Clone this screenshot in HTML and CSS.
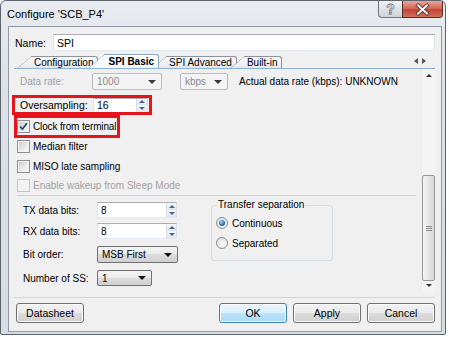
FILE: index.html
```html
<!DOCTYPE html>
<html lang="en">
<head>
    <meta charset="UTF-8">
    <meta name="viewport" content="width=device-width, initial-scale=1.0">
    <title>Configure 'SCB_P4'</title>
    <link rel="stylesheet" href="styles.css">
</head>
<body>
    <div class="window">
        <div class="titlebar">
            <span class="title">Configure 'SCB_P4'</span>
            <div class="caption">
                <span class="cap-help">?</span>
                <span class="cap-close">
                    <svg width="41" height="17" viewBox="0 0 41 17">
                        <path d="M16 4.5 L25 12.5 M25 4.5 L16 12.5" stroke="#4a2323" stroke-width="3.6" stroke-linecap="square"/>
                        <path d="M16 4.5 L25 12.5 M25 4.5 L16 12.5" stroke="#fff" stroke-width="2" stroke-linecap="square"/>
                    </svg>
                </span>
            </div>
        </div>

        <div class="client">
            <div class="name-row">
                <span class="name-label">Name:</span>
                <div class="textbox name-box">SPI</div>
            </div>

            <div class="tabs">
                <span class="tab t1">Configuration</span>
                <span class="tab t2 selected">SPI Basic</span>
                <span class="tab t3">SPI Advanced</span>
                <span class="tab t4">Built-in</span>
                <span class="tab-arrows"><i class="tri-left"></i><i class="tri-right"></i></span>
            </div>

            <div class="panel">
                <div class="panel-body">
                    <div class="row rate-row">
                        <span class="lbl dim">Data rate:</span>
                        <div class="combo combo-off rate-combo">1000<i class="arrow"></i></div>
                        <div class="combo combo-off unit-combo">kbps<i class="arrow"></i></div>
                        <span class="actual">Actual data rate (kbps): UNKNOWN</span>
                    </div>

                    <div class="row over-row marked">
                        <span class="lbl">Oversampling:</span>
                        <div class="textbox over-box">16<span class="spin"><i class="up"></i><i class="down"></i></span></div>
                    </div>

                    <div class="row check-row clock-row marked">
                        <span class="check on">
                            <svg width="11" height="11" viewBox="0 0 11 11"><path d="M2.2 5.6 L4.4 8.2 L8.8 2.2" fill="none" stroke="#21406f" stroke-width="1.6"/></svg>
                        </span>
                        Clock from terminal
                    </div>
                    <div class="row check-row median-row"><span class="check"></span>Median filter</div>
                    <div class="row check-row miso-row"><span class="check"></span>MISO late sampling</div>
                    <div class="row check-row wake-row dim"><span class="check off"></span>Enable wakeup from Sleep Mode</div>

                    <div class="divider"></div>

                    <div class="lower">
                        <div class="bits">
                            <div class="row tx-row">
                                <span class="lbl">TX data bits:</span>
                                <div class="textbox bits-box">8<span class="spin"><i class="up"></i><i class="down"></i></span></div>
                            </div>
                            <div class="row rx-row">
                                <span class="lbl">RX data bits:</span>
                                <div class="textbox bits-box">8<span class="spin"><i class="up"></i><i class="down"></i></span></div>
                            </div>
                            <div class="row order-row">
                                <span class="lbl">Bit order:</span>
                                <div class="combo order-combo">MSB First<i class="arrow"></i></div>
                            </div>
                            <div class="row ss-row">
                                <span class="lbl">Number of SS:</span>
                                <div class="combo ss-combo">1<i class="arrow"></i></div>
                            </div>
                        </div>

                        <fieldset class="group">
                            <legend>Transfer separation</legend>
                            <div class="radio-row first"><span class="radio on"></span>Continuous</div>
                            <div class="radio-row"><span class="radio"></span>Separated</div>
                        </fieldset>
                    </div>
                </div>

                <div class="scrollbar">
                    <div class="sb-btn"><i class="sb-up"></i></div>
                    <div class="sb-track">
                        <div class="sb-thumb"><span class="grip"></span></div>
                    </div>
                    <div class="sb-btn"><i class="sb-down"></i></div>
                </div>
            </div>

            <div class="footer">
                <div class="footer-line"></div>
                <div class="buttons">
                    <button class="btn datasheet">Datasheet</button>
                    <button class="btn ok">OK</button>
                    <button class="btn">Apply</button>
                    <button class="btn">Cancel</button>
                </div>
            </div>
        </div>
    </div>
</body>
</html>
```

FILE: styles.css
```css
* {
    box-sizing: border-box;
}
body {
    margin: 0;
    background: #fff;
    font-family: 'Liberation Sans', Arial, sans-serif;
    font-size: 10px;
    color: #000;
}
.window {
    width: 446px;
    height: 335px;
    border: 1px solid #5d646c;
    border-radius: 6px 6px 2px 2px;
    background: linear-gradient(to bottom, #e8ebef, #dce1e7 30%, #d8dde3);
    display: flex;
    flex-direction: column;
}
.titlebar {
    height: 25px;
    display: flex;
    align-items: flex-start;
}
.title {
    margin: 7px 0 0 6px;
    font-size: 11px;
    line-height: 13px;
}
.caption {
    margin-left: auto;
    margin-right: 2px;
    display: flex;
}
.cap-help {
    width: 24px;
    height: 17px;
    border: 1px solid #6f7780;
    border-top: none;
    border-right: none;
    border-radius: 0 0 0 4px;
    background: linear-gradient(to bottom, #f1f3f5, #dfe3e8 50%, #cdd3da);
    text-align: center;
    font-weight: bold;
    font-size: 14px;
    line-height: 16px;
    color: #fff;
    -webkit-text-stroke: 0.8px #6b7480;
}
.cap-close {
    width: 41px;
    height: 17px;
    border: 1px solid #5c2a25;
    border-top: none;
    border-radius: 0 0 4px 0;
    background: linear-gradient(to bottom, #e8a796, #d26a58 45%, #c24532 55%, #d0705e);
    display: block;
}
.cap-close svg {
    display: block;
    margin-left: -1px;
}
.client {
    flex: 1;
    margin: 0 3px 2px 7px;
    border: 1px solid #8f9aa6;
    background: #f0f0f0;
    padding: 0 6px 0 5px;
    display: flex;
    flex-direction: column;
}

/* name */
.name-row {
    display: flex;
    align-items: center;
    margin-top: 7px;
    height: 17px;
    font-size: 10.5px;
}
.name-label {
    width: 39px;
    padding-left: 1px;
}
.textbox {
    background: #fff;
    border: 1px solid;
    border-color: #abadb3 #dbdfe6 #e3e9ef #e2e3ea;
    display: flex;
    align-items: center;
    padding-left: 3px;
}
.name-box {
    flex: 1;
    height: 17px;
}

/* tabs */
.tabs {
    display: flex;
    align-items: flex-end;
    height: 14px;
    margin-top: 3px;
}
.tab {
    position: relative;
    height: 12px;
    line-height: 11px;
    font-size: 10px;
    padding: 0 4px 0 3px;
    border: 1px solid #8d939b;
    border-left: none;
    border-bottom: none;
    border-radius: 0 3px 0 0;
    background: linear-gradient(to bottom, #fbfbfb, #e6e7e9);
    margin-left: 6px;
    white-space: nowrap;
}
.tab::before {
    content: "";
    position: absolute;
    top: -1px;
    bottom: 0;
    left: -14px;
    width: 18px;
    border-left: 1px solid #8d939b;
    border-top: 1px solid #8d939b;
    border-radius: 2px 0 0 0;
    background: linear-gradient(to bottom, #fbfbfb, #e6e7e9);
    transform: skewX(-50deg);
    transform-origin: 0 100%;
    z-index: -1;
}
.t1 { margin-left: 17px; z-index: 1; }
.t2 { z-index: 5; }
.t3 { z-index: 2; margin-left: 7px; }
.t4 { z-index: 3; margin-left: 7px; }
.tab.selected {
    height: 14px;
    line-height: 13px;
    font-weight: bold;
    border-color: #8aa7c6;
    background: linear-gradient(to bottom, #fff, #f4f7fa);
    padding: 0 4px 0 4px;
}
.tab.selected::before {
    border-color: #8aa7c6;
    background: linear-gradient(to bottom, #fff, #f4f7fa);
    width: 20px;
    left: -16px;
}
.tab-arrows {
    margin-left: auto;
    margin-right: 9px;
    margin-bottom: 4px;
    display: flex;
    gap: 4px;
}
.tri-left, .tri-right {
    width: 0;
    height: 0;
    border-top: 3px solid transparent;
    border-bottom: 3px solid transparent;
}
.tri-left { border-right: 4px solid #555; }
.tri-right { border-left: 4px solid #555; }

/* panel */
.panel {
    height: 224px;
    border-top: 1px solid #8db2d8;
    display: flex;
}
.panel-body {
    flex: 1;
}
.row {
    display: flex;
    align-items: center;
    white-space: nowrap;
}
.lbl {
    flex: none;
}
.dim {
    color: #a2a2a2;
}
.rate-row {
    margin: 4px 0 0 6px;
    height: 17px;
}
.rate-row .lbl { width: 72px; }
.combo {
    height: 17px;
    border: 1px solid #707070;
    border-radius: 2px;
    background: linear-gradient(to bottom, #f3f3f3, #ebebeb 50%, #dddddd 50%, #d0d0d0);
    display: flex;
    align-items: center;
    padding-left: 4px;
}
.arrow {
    margin-left: auto;
    margin-right: 5px;
    width: 0;
    height: 0;
    border-left: 4px solid transparent;
    border-right: 4px solid transparent;
    border-top: 4px solid #111;
}
.combo-off {
    border-color: #b8bcc0;
    background: #f4f4f4;
    color: #8a8a8a;
}
.combo-off .arrow { border-top-color: #3a3a3a; }
.rate-combo { width: 70px; }
.unit-combo { width: 48px; margin-left: 18px; }
.actual { margin-left: 11px; }

.marked {
    outline: 3px solid #e5141d;
}
.over-row {
    margin: 8px 0 0 1px;
    width: 134px;
    height: 14px;
    padding: 0 1px 0 5px;
    font-size: 10.5px;
}
.over-row .lbl { width: 73px; }
.over-box {
    width: 55px;
    height: 15px;
}
.spin {
    margin-left: auto;
    width: 11px;
    height: 100%;
    display: flex;
    flex-direction: column;
    border-left: 1px solid #d6dce3;
}
.spin i {
    flex: 1;
    display: flex;
    align-items: center;
    justify-content: center;
    background: linear-gradient(to bottom, #f6f8fa, #dfe5ec);
}
.spin i::after {
    content: "";
    border-left: 3px solid transparent;
    border-right: 3px solid transparent;
}
.spin .up::after { border-bottom: 3px solid #4a6491; }
.spin .down::after { border-top: 3px solid #4a6491; }

.check-row {
    margin-left: 3px;
    height: 19px;
}
.clock-row {
    margin-top: 6px;
    width: 100px;
    height: 17px;
    letter-spacing: -0.15px;
}
.median-row { margin-top: 2px; }
.miso-row { margin-top: 1px; }
.check {
    width: 13px;
    height: 13px;
    margin-right: 3px;
    border: 1px solid #8e8f8f;
    background: linear-gradient(135deg, #c6c8cb, #eeeff0 65%, #f7f7f7);
    box-shadow: inset 0 0 0 1px #f4f4f4;
    display: flex;
    align-items: center;
    justify-content: center;
}
.check.off {
    border-color: #c3c3c3;
    background: #f3f3f3;
}
.divider {
    margin-left: 3px;
    width: 399px;
    border-top: 1px solid #d2d2d2;
}

.lower {
    display: flex;
    margin-top: 6px;
}
.bits {
    margin-left: 9px;
    width: 188px;
}
.bits .lbl { width: 74px; }
.bits-box {
    width: 80px;
    height: 16px;
}
.bits-box .spin { width: 10px; }
.rx-row { margin-top: 5px; }
.order-row { margin-top: 7px; }
.ss-row { margin-top: 7px; }
.order-combo { width: 81px; }
.ss-combo { width: 55px; height: 16px; }

.group {
    margin: -3px 0 0 0;
    width: 122px;
    height: 62px;
    border: 1px solid #d3dce3;
    border-radius: 3px;
    padding: 0 0 0 4px;
}
.group legend {
    margin-left: 1px;
    padding: 0 1px;
    line-height: 12px;
}
.radio-row {
    display: flex;
    align-items: center;
    height: 18px;
    margin-top: 2px;
}
.radio-row.first { margin-top: 3px; }
.radio {
    width: 12px;
    height: 12px;
    margin-right: 4px;
    border-radius: 50%;
    border: 1px solid #8e8f8f;
    background: radial-gradient(circle at 60% 65%, #fafafa, #d8d8d8);
    display: flex;
    align-items: center;
    justify-content: center;
}
.radio.on::after {
    content: "";
    width: 6px;
    height: 6px;
    border-radius: 50%;
    background: radial-gradient(circle at 40% 35%, #a6dcff, #2a73b8 55%, #0d3c78);
}

/* scrollbar */
.scrollbar {
    width: 14px;
    background: #f4f4f4;
    border-left: 1px solid #ececec;
    display: flex;
    flex-direction: column;
}
.sb-btn {
    height: 13px;
    display: flex;
    align-items: center;
    justify-content: center;
}
.sb-up, .sb-down {
    width: 0;
    height: 0;
    border-left: 3px solid transparent;
    border-right: 3px solid transparent;
}
.sb-up { border-bottom: 3px solid #333; }
.sb-down { border-top: 3px solid #333; }
.sb-track {
    flex: 1;
    display: flex;
    flex-direction: column;
    justify-content: flex-end;
}
.sb-thumb {
    height: 106px;
    margin: 0 0 -2px 0;
    border: 1px solid #979797;
    border-radius: 2px;
    background: linear-gradient(to right, #f5f5f5, #e6e6e6 50%, #d8d8d8);
    display: flex;
    align-items: center;
    justify-content: center;
}
.grip {
    width: 6px;
    height: 5px;
    border-top: 1px solid #8a8a8a;
    border-bottom: 1px solid #8a8a8a;
    position: relative;
}
.grip::after {
    content: "";
    position: absolute;
    left: 0;
    right: 0;
    top: 1px;
    border-top: 1px solid #8a8a8a;
}

/* footer */
.footer-line {
    margin-top: 5px;
    border-top: 1px solid #d5d5d5;
}
.buttons {
    display: flex;
    gap: 6px;
    margin-top: 5px;
}
.btn {
    width: 68px;
    height: 20px;
    padding: 0;
    border: 1px solid #707070;
    border-radius: 3px;
    background: linear-gradient(to bottom, #f2f2f2, #ebebeb 50%, #dddddd 50%, #cfcfcf);
    box-shadow: inset 0 0 0 1px #fbfbfb;
    font: inherit;
    font-size: 10.5px;
    color: #000;
}
.datasheet {
    margin-left: 2px;
    margin-right: auto;
}
.btn.ok {
    border-color: #3c7fb1;
    background: linear-gradient(to bottom, #eaf6fd, #d9f0fc 50%, #bee6fd 50%, #a7d9f5);
}
```
